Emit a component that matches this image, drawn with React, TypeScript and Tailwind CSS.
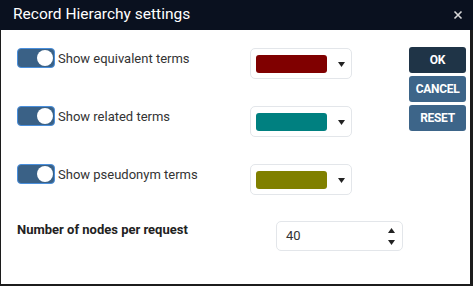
import React from "react";

const Toggle = () => (
  <div className="relative w-[38px] h-[20px] rounded-[4px] bg-[#3a6186] border border-[#4a8fdc] shrink-0">
    <div className="absolute right-[1px] top-[1px] w-[16px] h-[16px] rounded-full bg-white" />
  </div>
);

const Arrow = ({ up = false }: { up?: boolean }) => (
  <svg width="7" height="5" viewBox="0 0 7 5" className="block">
    {up ? <polygon points="0,5 7,5 3.5,0" fill="#222" /> : <polygon points="0,0 7,0 3.5,5" fill="#222" />}
  </svg>
);

const ColorSelect = ({ color }: { color: string }) => (
  <div className="w-[102px] h-[31px] rounded-[5px] border border-[#e3e6ea] bg-white flex items-center pl-[5px] pr-[6px] shrink-0">
    <div className="w-[71px] h-[18px] rounded-[3px]" style={{ backgroundColor: color }} />
    <div className="flex-1 flex justify-end pt-[1px]">
      <Arrow />
    </div>
  </div>
);

const Row = ({ label, color }: { label: string; color: string }) => (
  <div className="flex items-start h-[58px]">
    <div className="w-[233px] shrink-0 flex items-center gap-[3px]">
      <Toggle />
      <span className="text-[13px] text-[#333] leading-[15px]">{label}</span>
    </div>
    <ColorSelect color={color} />
  </div>
);

export default function App() {
  return (
    <div className="w-[473px] h-[286px] bg-[#1c1c1c] flex flex-col" style={{ fontFamily: "Roboto, 'Liberation Sans', sans-serif" }}>
      <div className="h-[30px] bg-[#0a111f] flex items-center justify-between pl-[13px] pr-[10px] shrink-0">
        <span className="text-white text-[15.5px] leading-none">Record Hierarchy settings</span>
        <svg width="10" height="10" viewBox="0 0 10 10">
          <path d="M1.5 1.5 L8.5 8.5 M8.5 1.5 L1.5 8.5" stroke="#d8d8d8" strokeWidth="1.6" />
        </svg>
      </div>
      <div className="flex-1 bg-white ml-[1px] mr-[3px] mb-[2px] flex">
        <div className="pl-[16px] pt-[18px] w-[392px] shrink-0">
          <Row label="Show equivalent terms" color="#800000" />
          <Row label="Show related terms" color="#008080" />
          <Row label="Show pseudonym terms" color="#808000" />
          <div className="flex items-start mt-[-1px]">
            <span className="w-[259px] shrink-0 text-[13px] font-bold text-[#222] leading-[15px] pt-[1px]">Number of nodes per request</span>
            <div className="w-[127px] h-[30px] shrink-0 rounded-[5px] border border-[#e3e6ea] flex items-center pl-[9px] pr-[7px]">
              <span className="text-[13px] text-[#333] flex-1">40</span>
              <div className="flex flex-col gap-[7px]">
                <Arrow up />
                <Arrow />
              </div>
            </div>
          </div>
        </div>
        <div className="pt-[17px] pl-[16px] flex flex-col gap-[3px]">
          <button className="w-[57px] h-[26px] rounded-[3px] bg-[#1f3447] text-white text-[12px] font-bold tracking-[-0.3px]">OK</button>
          <button className="w-[57px] h-[26px] rounded-[3px] bg-[#3d6589] text-white text-[12px] font-bold tracking-[-0.3px]">CANCEL</button>
          <button className="w-[57px] h-[26px] rounded-[3px] bg-[#3d6589] text-white text-[12px] font-bold tracking-[-0.3px]">RESET</button>
        </div>
      </div>
    </div>
  );
}
